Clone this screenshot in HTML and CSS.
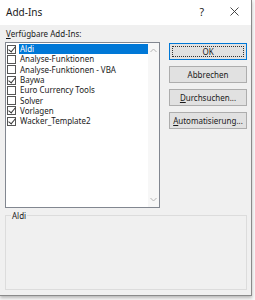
FILE: index.html
```html
<!DOCTYPE html>
<html lang="de">
<head>
<meta charset="utf-8">
<title>Add-Ins</title>
<link rel="stylesheet" href="styles.css">
</head>
<body>
<div class="dialog">
  <div class="titlebar">
    <span class="title">Add-Ins</span>
    <span class="help">?</span>
    <svg class="close" width="9" height="9" viewBox="0 0 9 9"><path d="M0.5 0.5 L8.5 8.5 M8.5 0.5 L0.5 8.5" stroke="#333" stroke-width="0.9" fill="none"/></svg>
  </div>
  <div class="content">
    <p class="caption"><u>V</u>erfügbare Add-Ins:</p>
    <div class="main">
      <div class="listbox">
        <div class="items">
          <div class="item checked selected"><span class="box"></span><span class="name">Aldi</span></div>
          <div class="item"><span class="box"></span><span class="name">Analyse-Funktionen</span></div>
          <div class="item"><span class="box"></span><span class="name">Analyse-Funktionen - VBA</span></div>
          <div class="item checked"><span class="box"></span><span class="name">Baywa</span></div>
          <div class="item"><span class="box"></span><span class="name">Euro Currency Tools</span></div>
          <div class="item"><span class="box"></span><span class="name">Solver</span></div>
          <div class="item checked"><span class="box"></span><span class="name">Vorlagen</span></div>
          <div class="item checked"><span class="box"></span><span class="name">Wacker_Template2</span></div>
        </div>
        <div class="scrollbar">
          <svg width="7" height="5" viewBox="0 0 7 5"><path d="M0.5 4 L3.5 1 L6.5 4" stroke="#b4b4b4" fill="none"/></svg>
          <svg width="7" height="5" viewBox="0 0 7 5"><path d="M0.5 1 L3.5 4 L6.5 1" stroke="#b4b4b4" fill="none"/></svg>
        </div>
      </div>
      <div class="buttons">
        <div class="btn default"><span class="focus">OK</span></div>
        <div class="btn">Abbrechen</div>
        <div class="btn"><span><u>D</u>urchsuchen...</span></div>
        <div class="btn"><span><u>A</u>utomatisierung...</span></div>
      </div>
    </div>
    <div class="group">
      <span class="legend">Aldi</span>
    </div>
  </div>
</div>
</body>
</html>
```

FILE: styles.css
```css
html, body {
	margin: 0;
	padding: 0;
}
body {
	width: 255px;
	height: 300px;
	background: #f7f7f7;
	font-family: "Noto Sans", "Open Sans", sans-serif;
	font-size: 8px;
	color: #1a1a1a;
	overflow: hidden;
}
.dialog {
	width: 252px;
	height: 296px;
	background: #f0f0f0;
	border-right: 1px solid #8a8a8a;
	border-bottom: 1px solid #8a8a8a;
	box-shadow: 0 2px 3px rgba(0, 0, 0, 0.25);
	display: flex;
	flex-direction: column;
	box-sizing: border-box;
}
.titlebar {
	height: 25px;
	background: #ffffff;
	display: flex;
	align-items: center;
	padding: 0 12px 0 6px;
}
.title {
	font-size: 10px;
	flex: 1;
	padding-bottom: 2px;
}
.help {
	font-size: 10.5px;
	margin-right: 26px;
	padding-bottom: 2px;
}
.close {
	margin-bottom: 2px;
}
.content {
	padding: 0 4px 0 5px;
	flex: 1;
}
.caption {
	margin: 3px 0 3px 1px;
	line-height: 11px;
}
.main {
	display: flex;
	gap: 9px;
}
.listbox {
	width: 155px;
	height: 166px;
	box-sizing: border-box;
	border: 1px solid #828790;
	background: #ffffff;
	display: flex;
}
.items {
	flex: 1;
	padding-top: 1px;
}
.item {
	height: 10.3px;
	display: flex;
	align-items: center;
	padding-left: 1px;
}
.box {
	width: 9px;
	height: 9px;
	box-sizing: border-box;
	border: 1px solid #555;
	background: #fff;
	margin-right: 3px;
	position: relative;
}
.checked .box::after {
	content: "";
	position: absolute;
	left: 2px;
	top: -1px;
	width: 3px;
	height: 6px;
	border-right: 1px solid #333;
	border-bottom: 1px solid #333;
	transform: rotate(40deg);
}
.name {
	flex: 1;
	height: 10px;
	line-height: 10px;
	padding-left: 1px;
}
.selected .name {
	background: #0078d7;
	color: #ffffff;
}
.scrollbar {
	width: 11px;
	background: #f7f7f7;
	display: flex;
	flex-direction: column;
	justify-content: space-between;
	align-items: center;
	padding: 5px 0 5px;
}
.buttons {
	display: flex;
	flex-direction: column;
	gap: 6px;
	padding-top: 1px;
}
.btn {
	width: 78px;
	height: 17px;
	box-sizing: border-box;
	border: 1px solid #adadad;
	background: #e1e1e1;
	display: flex;
	align-items: center;
	justify-content: center;
}
.btn.default {
	border-color: #0078d7;
	padding: 2px;
}
.focus {
	flex: 1;
	align-self: stretch;
	border: 1px dotted #333;
	display: flex;
	align-items: center;
	justify-content: center;
}
.group {
	margin-top: 7px;
	width: 242px;
	height: 75px;
	box-sizing: border-box;
	border: 1px solid #dcdcdc;
	position: relative;
}
.legend {
	position: absolute;
	left: 5px;
	top: -6px;
	background: #f0f0f0;
	padding: 0 1px;
	line-height: 11px;
}
```
